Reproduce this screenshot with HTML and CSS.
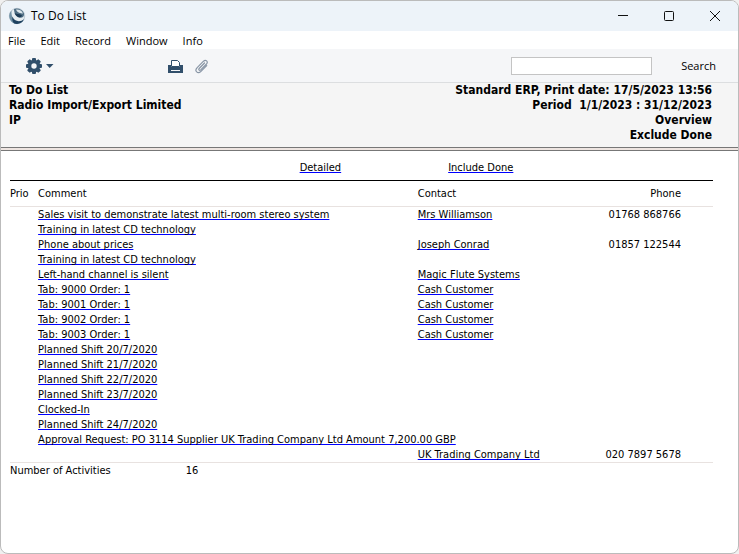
FILE: index.html
```html
<!DOCTYPE html>
<html lang="en">
<head>
    <meta charset="UTF-8">
    <meta name="viewport" content="width=device-width, initial-scale=1.0">
    <title>To Do List</title>
    <link rel="stylesheet" href="styles.css">
</head>
<body>

<div class="window">
    <!-- Title bar -->
    <header class="title-bar">
        <svg class="logo" width="18" height="18" viewBox="0 0 18 18">
            <circle cx="9" cy="9" r="7.700" fill="#e6edf1" stroke="#9fb2bf" stroke-width="0.600"/>
            <path d="M3.500 3.500A7.900 7.900 0 0 0 10 16.800C6 14.500 3 10 3.500 3.500Z" fill="#6f8fa3"/>
            <path d="M4.500 9.500C6 14 11.500 16 16.300 12A8 8 0 0 1 6 16.300C4.300 14.500 4 12 4.500 9.500Z" fill="#1f4260"/>
            <path d="M6 2C9 0.500 14.500 2 16 6.500C16.500 9.500 14.500 11 12 10.800C8.500 10.500 6 6.500 6 2Z" fill="#4d6c82"/>
            <path d="M6.500 6C9 7.500 12 6.500 14 8.500C13.500 11 8.500 11 6.500 6Z" fill="#1c3b55"/>
            <path d="M8 2.500C11 2 14 3.500 15 6.500C12.500 6.500 9 5.500 8 2.500Z" fill="#dce6eb"/>
        </svg>
        <h1>To Do List</h1>
        <div class="window-buttons">
            <button aria-label="Minimize"><svg width="12" height="12" viewBox="0 0 12 12"><path d="M1 5.500H11" /></svg></button>
            <button aria-label="Maximize"><svg width="12" height="12" viewBox="0 0 12 12"><rect x="1.500" y="1.500" width="9" height="9" rx="1"/></svg></button>
            <button aria-label="Close"><svg width="12" height="12" viewBox="0 0 12 12"><path d="M1 1L11 11M11 1L1 11"/></svg></button>
        </div>
    </header>

    <!-- Menu -->
    <nav class="menu">
        <button>File</button>
        <button>Edit</button>
        <button>Record</button>
        <button>Window</button>
        <button>Info</button>
    </nav>

    <!-- Toolbar -->
    <div class="toolbar">
        <button class="gear" aria-label="Operations">
            <svg width="28" height="16" viewBox="0 0 28 16">
                <g fill="#314f6b">
                    <rect x="6" y="0" width="4" height="16" rx="1"/>
                    <rect x="6" y="0" width="4" height="16" rx="1" transform="rotate(45 8 8)"/>
                    <rect x="6" y="0" width="4" height="16" rx="1" transform="rotate(90 8 8)"/>
                    <rect x="6" y="0" width="4" height="16" rx="1" transform="rotate(135 8 8)"/>
                    <circle cx="8" cy="8" r="6.300"/>
                    <path d="M20 6H27.500L23.700 10Z"/>
                </g>
                <circle cx="8" cy="8" r="2.700" fill="#f5f6f8"/>
            </svg>
        </button>
        <button aria-label="Print">
            <svg width="16" height="14" viewBox="0 0 16 14">
                <path d="M0 6H3V8H12V6H15V14H0Z" fill="#314f6b"/>
                <path d="M3.500 7.500V1.500H9.500L11.500 3.500V7.500Z" fill="#fff" stroke="#314f6b"/>
                <path d="M3 11.500H12" stroke="#f5f6f8"/>
            </svg>
        </button>
        <button class="clip" aria-label="Attachments">
            <svg width="16" height="16" viewBox="0 0 16 16">
                <path d="M10.500 5L5.200 10.500C4.200 11.700 5.500 13 6.700 11.900L12.500 6C14.500 3.700 11.800 1 9.500 3.200L3.200 9.600C0 13 3.800 16.500 7 13.400L12.700 7.700" fill="none" stroke="#8996a6" stroke-width="1.200" stroke-linecap="round"/>
            </svg>
        </button>
        <div class="search">
            <input type="text" id="search">
            <label for="search">Search</label>
        </div>
    </div>

    <!-- Report heading -->
    <section class="report-head">
        <div>
            <p>To Do List</p>
            <p>Radio Import/Export Limited</p>
            <p>IP</p>
        </div>
        <div class="report-info">
            <p>Standard ERP, Print date: 17/5/2023 13:56</p>
            <p>Period&nbsp; 1/1/2023 : 31/12/2023</p>
            <p>Overview</p>
            <p>Exclude Done</p>
        </div>
    </section>
    <div class="divider"></div>

    <!-- Report -->
    <main class="report">
        <div class="options">
            <a href="#">Detailed</a>
            <a href="#">Include Done</a>
        </div>
        <table>
            <colgroup>
                <col class="col-prio">
                <col class="col-comment">
                <col class="col-contact">
                <col class="col-phone">
            </colgroup>
            <thead>
                <tr><th>Prio</th><th>Comment</th><th>Contact</th><th>Phone</th></tr>
            </thead>
            <tbody>
                <tr><td></td><td><a href="#">Sales visit to demonstrate latest multi-room stereo system</a></td><td><a href="#">Mrs Williamson</a></td><td>01768 868766</td></tr>
                <tr><td></td><td><a href="#">Training in latest CD technology</a></td><td></td><td></td></tr>
                <tr><td></td><td><a href="#">Phone about prices</a></td><td><a href="#">Joseph Conrad</a></td><td>01857 122544</td></tr>
                <tr><td></td><td><a href="#">Training in latest CD technology</a></td><td></td><td></td></tr>
                <tr><td></td><td><a href="#">Left-hand channel is silent</a></td><td><a href="#">Magic Flute Systems</a></td><td></td></tr>
                <tr><td></td><td><a href="#">Tab: 9000 Order: 1</a></td><td><a href="#">Cash Customer</a></td><td></td></tr>
                <tr><td></td><td><a href="#">Tab: 9001 Order: 1</a></td><td><a href="#">Cash Customer</a></td><td></td></tr>
                <tr><td></td><td><a href="#">Tab: 9002 Order: 1</a></td><td><a href="#">Cash Customer</a></td><td></td></tr>
                <tr><td></td><td><a href="#">Tab: 9003 Order: 1</a></td><td><a href="#">Cash Customer</a></td><td></td></tr>
                <tr><td></td><td><a href="#">Planned Shift 20/7/2020</a></td><td></td><td></td></tr>
                <tr><td></td><td><a href="#">Planned Shift 21/7/2020</a></td><td></td><td></td></tr>
                <tr><td></td><td><a href="#">Planned Shift 22/7/2020</a></td><td></td><td></td></tr>
                <tr><td></td><td><a href="#">Planned Shift 23/7/2020</a></td><td></td><td></td></tr>
                <tr><td></td><td><a href="#">Clocked-In</a></td><td></td><td></td></tr>
                <tr><td></td><td><a href="#">Planned Shift 24/7/2020</a></td><td></td><td></td></tr>
                <tr><td></td><td colspan="3"><a href="#">Approval Request: PO 3114 Supplier UK Trading Company Ltd Amount 7,200.00 GBP</a></td></tr>
                <tr><td></td><td></td><td><a href="#">UK Trading Company Ltd</a></td><td>020 7897 5678</td></tr>
            </tbody>
        </table>
        <div class="total">
            <span>Number of Activities</span>
            <span>16</span>
        </div>
    </main>
</div>

</body>
</html>
```
FILE: styles.css
```css
* {
    box-sizing: border-box;
}
body {
    margin: 0;
    background-color: #f0f0f0;
    color: #000;
    font-family: "DejaVu Sans Condensed", "Noto Sans", sans-serif;
    font-size: 11px;
    line-height: 15px;
}
p {
    margin: 0;
}
button {
    display: flex;
    padding: 0;
    border: none;
    background: none;
    color: inherit;
    font: inherit;
}
.window {
    min-height: 100vh;
    border: 1px solid #bbb;
    border-radius: 8px;
    overflow: hidden;
    background-color: #fff;
}
.title-bar {
    display: flex;
    align-items: center;
    height: 30px;
    padding: 0 17px 0 7px;
    background-color: #edf3f9;
}
.title-bar h1 {
    margin: 0 0 0 5px;
    font: 12px/16px "Open Sans", sans-serif;
}
.window-buttons {
    display: flex;
    gap: 34px;
    margin-left: auto;
}
.window-buttons svg {
    fill: none;
    stroke: #111;
}
.menu {
    display: flex;
    gap: 15px;
    height: 18px;
    padding: 0 7px;
    font: 11px/20px "Open Sans", sans-serif;
}
.toolbar {
    display: flex;
    align-items: center;
    height: 34px;
    padding: 0 22px 0 25px;
    border-bottom: 1px solid #dcdee0;
    background-color: #f5f6f8;
}
.gear {
    margin-right: 114px;
}
.clip {
    margin-left: 10px;
}
.search {
    display: flex;
    align-items: center;
    gap: 29px;
    margin-left: auto;
    font: 11px/16px "Open Sans", sans-serif;
}
.search input {
    width: 141px;
    height: 18px;
    padding: 0 4px;
    border: 1px solid #c4c4c4;
    background-color: #fff;
}
.report-head {
    display: flex;
    justify-content: space-between;
    padding: 0 26px 4px 8px;
    background-color: #f5f5f5;
    font-size: 12px;
    font-weight: bold;
}
.report-info {
    text-align: right;
}
.divider {
    height: 4px;
    border-top: 1px solid #777;
    border-bottom: 1px solid #777;
    background-color: #eee5e1;
}
.report {
    padding: 9px 25px 0 9px;
}
.report a {
    color: inherit;
    text-decoration: underline 1px #00f;
    text-underline-offset: 1px;
    text-decoration-skip-ink: none;
}
.options {
    display: flex;
    justify-content: center;
    gap: 107px;
    padding-bottom: 5px;
    padding-left: 90px;
    border-bottom: 1px solid #000;
}
table {
    width: 100%;
    table-layout: fixed;
    border-collapse: collapse;
}
.col-prio {
    width: 4%;
}
.col-comment {
    width: 54%;
}
.col-contact {
    width: 19%;
}
th, td {
    height: 15px;
    padding: 0;
    font-weight: normal;
    text-align: left;
    white-space: nowrap;
}
th {
    padding: 5px 0;
}
thead, tbody {
    border-bottom: 1px solid #e8e2e0;
}
th:last-child, td:last-child:nth-child(4) {
    padding-right: 32px;
    text-align: right;
}
.total {
    display: flex;
    gap: 75px;
}
```
